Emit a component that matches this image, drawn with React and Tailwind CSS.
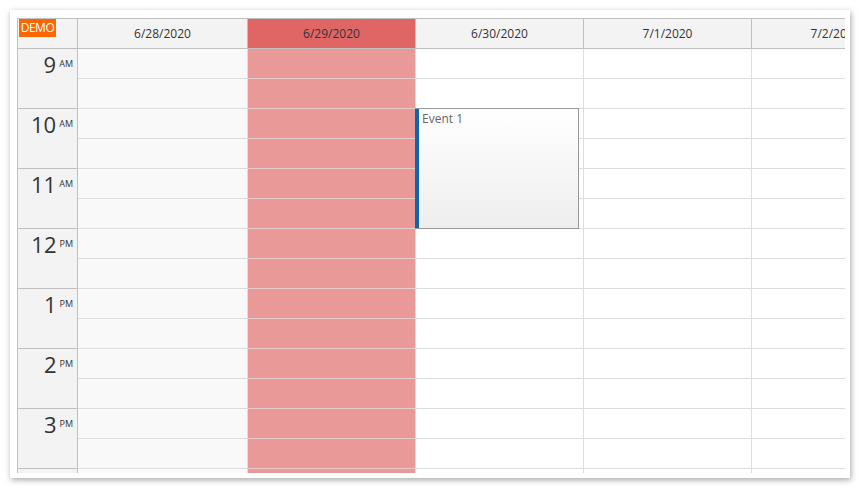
import React from "react";

const days = [
  { label: "6/28/2020", width: "w-[170px]", kind: "weekend" },
  { label: "6/29/2020", width: "w-[168px]", kind: "selected" },
  { label: "6/30/2020", width: "w-[168px]", kind: "normal", event: true },
  { label: "7/1/2020", width: "w-[168px]", kind: "normal" },
  { label: "7/2/2020", width: "w-[168px]", kind: "normal" },
];

const hours = [
  ["9", "AM"],
  ["10", "AM"],
  ["11", "AM"],
  ["12", "PM"],
  ["1", "PM"],
  ["2", "PM"],
  ["3", "PM"],
];

const cells = Array.from({ length: 16 });

const headerBg = {
  weekend: "bg-[#f3f3f3]",
  selected: "bg-[#e06666]",
  normal: "bg-[#f3f3f3]",
};

const cellStyle = {
  weekend: "bg-[#f9f9f9] border-[#dddddd]",
  selected: "bg-[#ea9999] border-[#e8cccc]",
  normal: "bg-white border-[#dddddd]",
};

const DayColumn = ({ day }) => (
  <div className={`${day.width} shrink-0 relative border-r border-[#dddddd]`}>
    {cells.map((_, i) => (
      <div key={i} className={`h-[30px] border-b ${cellStyle[day.kind]}`} />
    ))}

    {/* Event box */}
    {day.event && (
      <div className="absolute left-[-1px] top-[59px] w-[164px] h-[121px] flex border border-l-0 border-[#999999] bg-linear-to-b from-white to-[#eeeeee]">
        <div className="w-[4px] bg-[#1066a8] shrink-0" />
        <div className="pl-[3px] pt-[2px] text-[12px] leading-[16px] text-[#666666]">
          Event 1
        </div>
      </div>
    )}
  </div>
);

export default function App() {
  return (
    <div
      className="w-[860px] h-[488px] bg-white p-[10px]"
      style={{ fontFamily: '"Open Sans", "DejaVu Sans", sans-serif' }}
    >
      <div className="w-[840px] h-[468px] bg-white pl-[7px] pt-[8px] shadow-[1px_2px_6px_rgba(0,0,0,0.35)]">
        <div className="w-[828px] h-[455px] overflow-hidden border-l border-t border-[#c0c0c0]">
          {/* Header */}
          <div className="flex h-[30px] border-b border-[#c0c0c0] bg-[#f3f3f3]">
            <div className="w-[60px] shrink-0 border-r border-[#c0c0c0] relative">
              <div className="absolute left-[1px] top-0 w-[37px] h-[18px] bg-[#ff6600] text-white text-[12px] tracking-[-0.5px] leading-[18px] text-center">
                DEMO
              </div>
            </div>
            {days.map((d) => (
              <div
                key={d.label}
                className={`${d.width} shrink-0 border-r border-[#c0c0c0] ${headerBg[d.kind]} flex items-center justify-center text-[12px] text-[#333333]`}
              >
                {d.label}
              </div>
            ))}
          </div>

          {/* Body */}
          <div className="flex">
            <div className="w-[60px] shrink-0 bg-[#f3f3f3] border-r border-[#c0c0c0]">
              {hours.map(([h, ap]) => (
                <div
                  key={h}
                  className="h-[60px] border-b border-[#c0c0c0] flex justify-end pr-[4px] pt-[4px] text-[#333333]"
                >
                  <span className="text-[22px] leading-none">{h}</span>
                  <span className="text-[9px] leading-none ml-[3px] mt-[6px]">{ap}</span>
                </div>
              ))}
              <div className="h-[60px]" />
            </div>
            {days.map((d) => (
              <DayColumn key={d.label} day={d} />
            ))}
          </div>
        </div>
      </div>
    </div>
  );
}
